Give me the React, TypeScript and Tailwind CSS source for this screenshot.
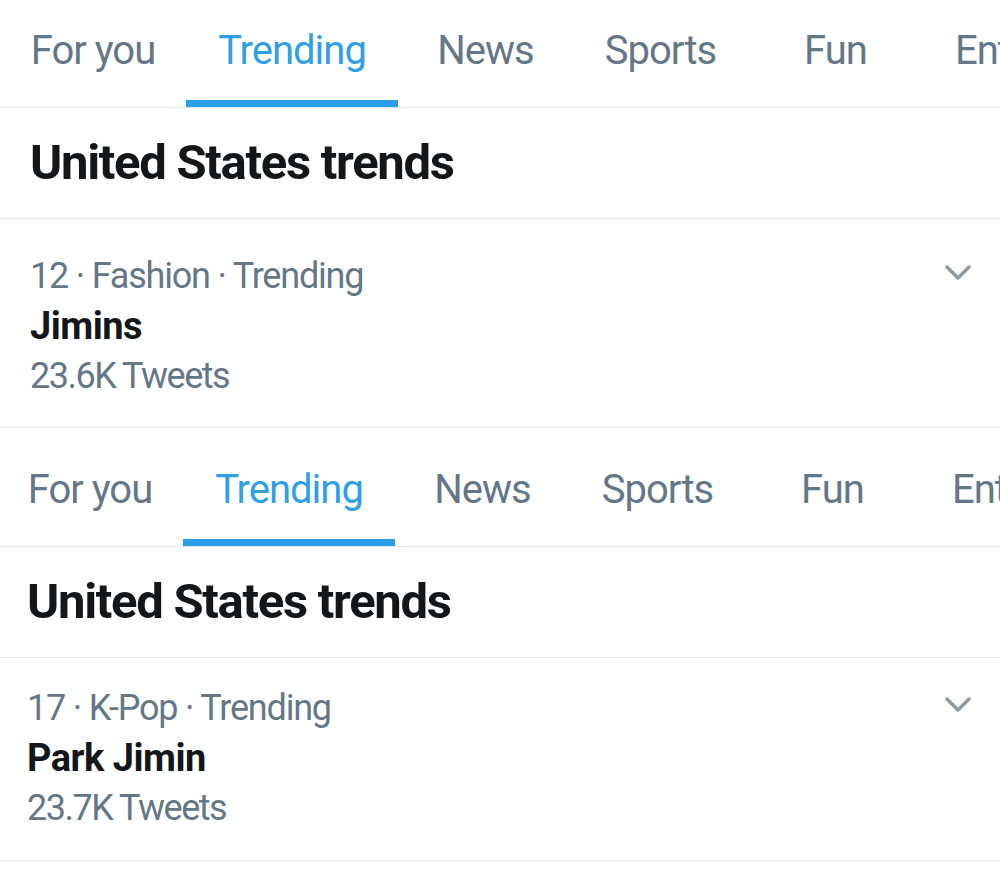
import React from 'react';

interface Trend {
  meta: string;
  name: string;
  count: string;
}

interface PanelProps {
  trend: Trend;
  shift: string;
  tabsPt: string;
  trendPad: string;
}

const tabs = [
  { id: 'foryou', label: 'For you', width: 'w-[186px]' },
  { id: 'trending', label: 'Trending', width: 'w-[212px]', active: true },
  { id: 'news', label: 'News', width: 'w-[175px]' },
  { id: 'sports', label: 'Sports', width: 'w-[175px]' },
  { id: 'fun', label: 'Fun', width: 'w-[175px]' },
];

const Chevron = () => (
  <svg width="26" height="16" viewBox="0 0 26 16" fill="none" className="shrink-0">
    <polyline
      points="2,2 13,13 24,2"
      stroke="#8d9aa6"
      strokeWidth="3.5"
      strokeLinecap="round"
      strokeLinejoin="round"
    />
  </svg>
);

const Panel: React.FC<PanelProps> = ({ trend, shift, tabsPt, trendPad }) => (
  <div className={shift}>
    {/* tab strip */}
    <div className="flex border-b border-[#e1e8ed] whitespace-nowrap">
      {tabs.map((tab) => (
        <div key={tab.id} className={`${tab.width} shrink-0 flex flex-col items-center ${tabsPt}`}>
          <span
            className={`text-[40px] leading-[50px] tracking-[-1px] ${
              tab.active ? 'text-[#2fa0e6]' : 'text-[#657786]'
            }`}
          >
            {tab.label}
          </span>
          <div className={`mt-[24px] h-[7px] w-full ${tab.active ? 'bg-[#2a9de8]' : ''}`} />
        </div>
      ))}
      <div className={`shrink-0 pl-[32px] ${tabsPt}`}>
        <span className="text-[40px] leading-[50px] tracking-[-1px] text-[#657786]">Ent</span>
      </div>
    </div>

    {/* header */}
    <div className="border-b border-[#e1e8ed] pl-[30px] pt-[25px] pb-[25px]">
      <h2 className="text-[49px] leading-[60px] font-bold text-[#14171a] tracking-[-1.3px]">
        United States trends
      </h2>
    </div>

    {/* trend row */}
    <div className={`flex justify-between border-b border-[#e1e8ed] pl-[30px] pr-[29px] ${trendPad}`}>
      <div className="flex flex-col">
        <span className="text-[36px] leading-[50px] text-[#657786] tracking-[-1.2px]">{trend.meta}</span>
        <span className="text-[38px] leading-[50px] font-bold text-[#14171a] tracking-[-0.5px]">{trend.name}</span>
        <span className="text-[36px] leading-[50px] text-[#657786] tracking-[-1.5px]">{trend.count}</span>
      </div>
      <div className="pt-[14px]">
        <Chevron />
      </div>
    </div>
  </div>
);

export default function App() {
  return (
    <div className="w-[1000px] h-[875px] overflow-hidden bg-white font-['Roboto',sans-serif]">
      <Panel
        shift="ml-0"
        tabsPt="pt-[26px]"
        trendPad="pt-[32px] pb-[26px]"
        trend={{ meta: '12 · Fashion · Trending', name: 'Jimins', count: '23.6K Tweets' }}
      />
      <Panel
        shift="-ml-[3px]"
        tabsPt="pt-[37px]"
        trendPad="pt-[25px] pb-[27px]"
        trend={{ meta: '17 · K-Pop · Trending', name: 'Park Jimin', count: '23.7K Tweets' }}
      />
    </div>
  );
}
